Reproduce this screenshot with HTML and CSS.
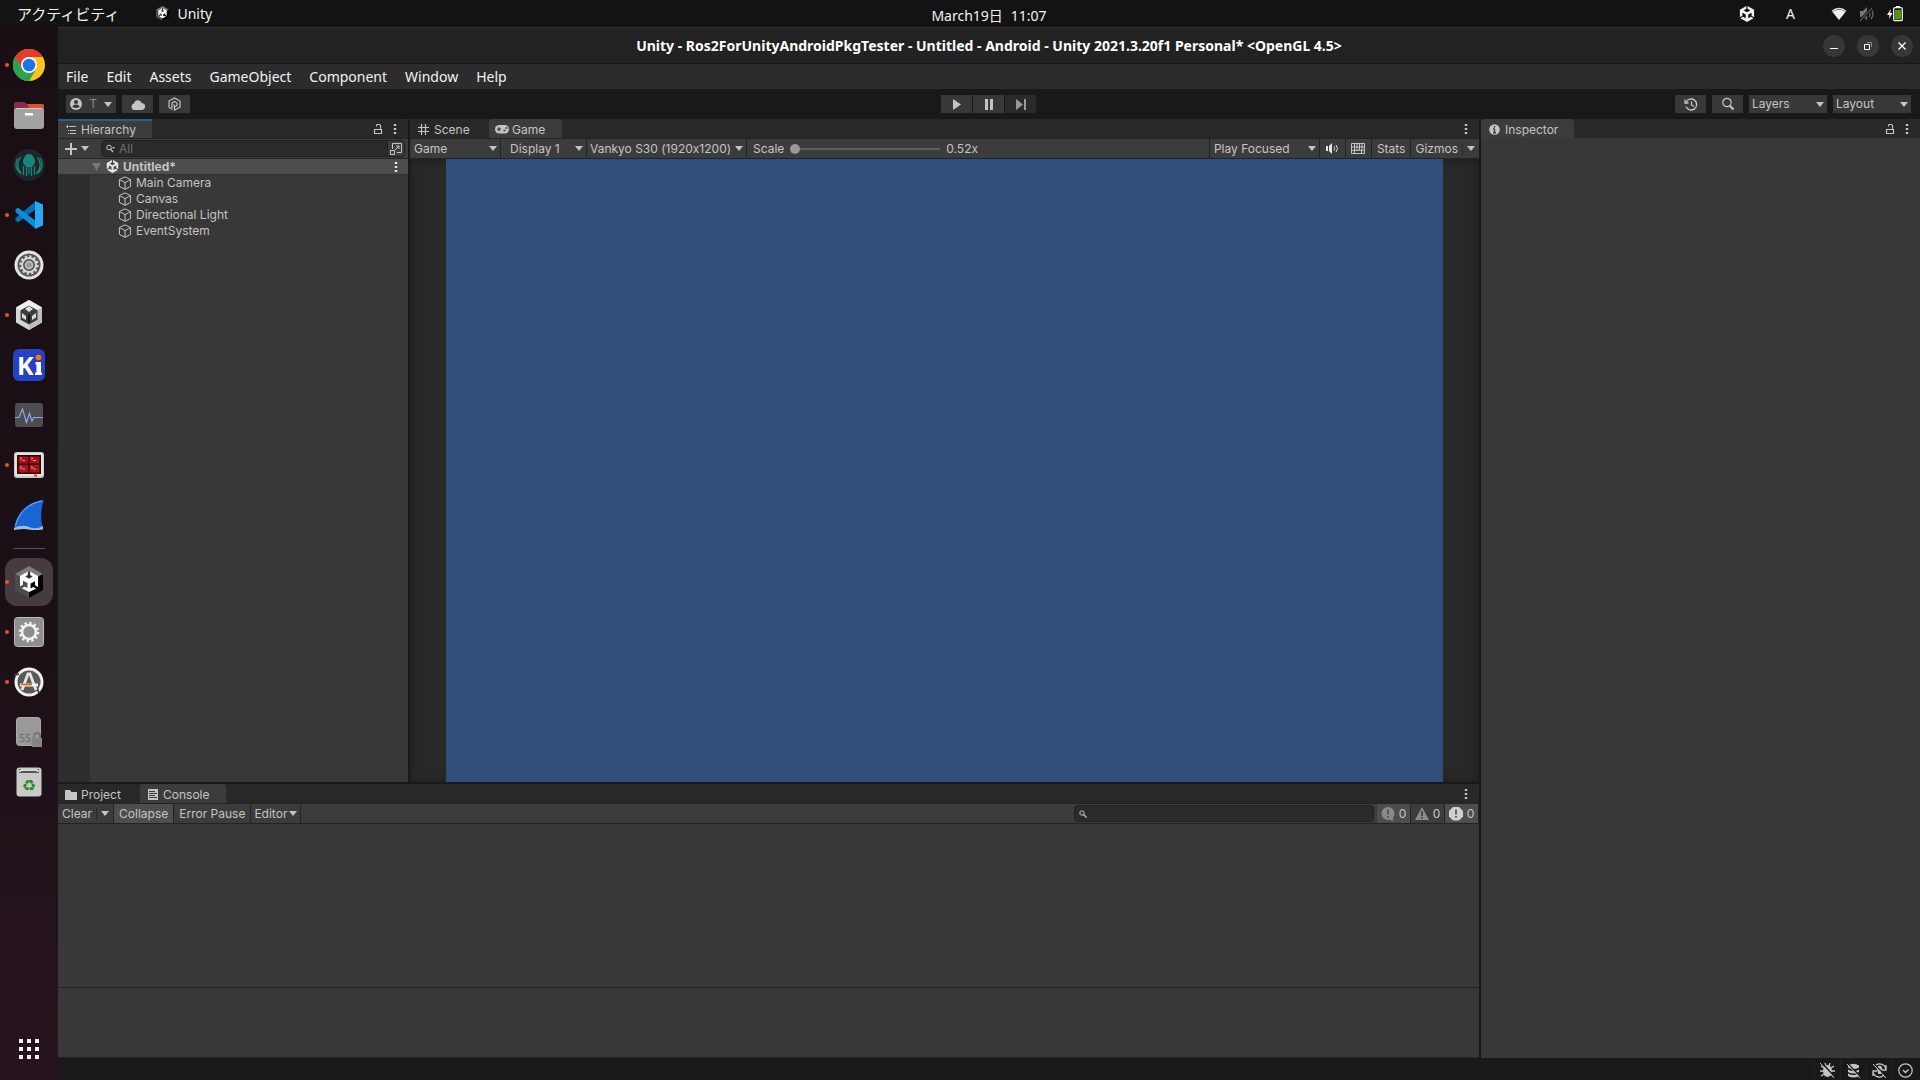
FILE: index.html
```
<!DOCTYPE html>
<html lang="ja">
  <head>
    <meta charset="UTF-8" />
    <title>Unity</title>
    <link rel="stylesheet" href="styles.css">
  </head>

  <body>
    <!-- shared icons -->
    <svg class="defs" aria-hidden="true">
      <symbol id="unity" viewBox="0 0 24 24"><path d="m12.9288 4.2939 3.7997 2.1929c.1366.077.1415.2905 0 .3675l-4.515 2.6076a.4192.4192 0 0 1-.4246 0L7.274 6.8543c-.139-.0745-.1415-.293 0-.3675l3.7972-2.193V0L1.3758 5.5977V16.793l3.7177-2.1456v-4.3858c-.0025-.1565.1813-.2682.318-.1838l4.5148 2.6076a.4252.4252 0 0 1 .2136.3676v5.2127c.0025.1565-.1813.2682-.3179.1838l-3.7996-2.1929-3.7178 2.1457L12 24l9.6954-5.5977-3.7178-2.1457-3.7996 2.1929c-.1341.082-.3229-.0248-.3179-.1838V13.053c0-.1565.087-.2956.2136-.3676l4.5149-2.6076c.134-.082.3228.0224.3179.1838v4.3858l3.7177 2.1456V5.5977L12.9288 0Z" fill="currentColor"/></symbol>
      <symbol id="unity-hex" viewBox="0 0 32 32">
        <path d="M16 0 30 8 16 16 2 8z" fill="#7b7b7b"/>
        <path d="M2 8 16 16V32L2 24z" fill="#4c4c4c"/>
        <path d="M30 8 16 16V32l14-8z" fill="#000"/>
        <path d="m16 5.500 3.500 1.900v3.500L16 12.800l-3.500-1.900V7.400z" fill="#333"/>
        <path d="M14.800 5.500v3.600l-2.600 1.500 3.800 2.100 3.800-2.100-2.600-1.500V5.500l7.800 4.500v11l-3-1.700v-4.100l-4.400 2.400v4.900l2.600-1.500 3 1.700L16 26l-7.200-3.800 3-1.700 2.600 1.500v-4.900L10 14.700v4.100L7 20.500V10z" fill="#fff"/>
      </symbol>
      <symbol id="cube" viewBox="0 0 14 14"><path d="M7 .8 12.600 3.600V10.400L7 13.300 1.400 10.400V3.600zM1.400 3.600 7 6.600l5.600-3M7 6.600v6.700" fill="none" stroke="currentColor"/></symbol>
      <symbol id="kebab" viewBox="0 0 4 12"><path d="M.8 1h2.400v2H.8zM.8 5h2.400v2H.8zM.8 9h2.400v2H.8z" fill="currentColor"/></symbol>
      <symbol id="lock" viewBox="0 0 10 12"><path d="M1.500 6.500h7v4h-7zM3.500 3.500V2.500a1 1 0 0 1 1-1h2a1 1 0 0 1 1 1v4" fill="none" stroke="currentColor" stroke-width="1.200"/></symbol>
      <symbol id="magnifier" viewBox="0 0 14 14"><circle cx="6" cy="5.500" r="4.200" fill="none" stroke="currentColor" stroke-width="1.200"/><path d="m9 9 3.500 3.500" stroke="currentColor" stroke-width="2.200"/></symbol>
    </svg>

    <header class="topbar">
      <div class="top-left">
        <a href="#" class="activities">アクティビティ</a>
        <a href="#" class="app-menu"><svg width="15" height="17"><use href="#unity-hex"/></svg>Unity</a>
      </div>
      <div class="clock"><span>March19日</span><span>11:07</span></div>
      <div class="tray">
        <svg class="tray-unity" width="16" height="16"><use href="#unity"/></svg>
        <span class="ime">A</span>
        <svg width="16" height="14" viewBox="0 0 16 14"><path d="M1 4.300C5 .6 11 .6 15 4.300" fill="none" stroke="#ddd" stroke-width="1.400"/><path d="M8 13 1.500 5C5.500 2 10.500 2 14.500 5z" fill="#f2f2f2"/></svg>
        <svg class="sound" width="16" height="16" viewBox="0 0 16 16"><path d="M1 5h3l4-4v13L4 11H1z" fill="#777"/><path d="M10 5q2 3 0 6M12 3q4 5 0 10" fill="none" stroke="#666" stroke-width="1.300"/><path d="M1 15 14 1" stroke="#131313" stroke-width="3"/><path d="M1 15 13 2" stroke="#777"/></svg>
        <svg class="battery" width="17" height="16" viewBox="0 0 17 16"><path d="M4 3 0 9h2.500L2 13l3.500-6H3.200z" fill="#fff"/><path d="M9 0h4v2H9z" fill="#fff"/><rect x="6.700" y="1.700" width="8.600" height="13" rx="1.300" fill="#131313" stroke="#eee" stroke-width="1.300"/><path d="M8 4h6v9.500H8z" fill="#4e9a06"/></svg>
      </div>
    </header>

    <div class="desktop">
      <nav class="dock">
        <button class="app running" aria-label="Chrome"><svg width="32" height="32" viewBox="0 0 32 32"><circle cx="16" cy="16" r="16" fill="#fcc31e"/><path d="M2.100 8A16 16 0 0 0 16 32l7-12-7 4-7-4z" fill="#2da14b"/><path d="M16 0A16 16 0 0 1 29.900 8H16l-7 12L2.100 8A16 16 0 0 1 16 0z" fill="#e33b2e"/><path d="M2.100 8A16 16 0 0 0 16 32l6.900-12H9z" fill="#2da14b"/><circle cx="16" cy="16" r="8" fill="#fff"/><circle cx="16" cy="16" r="6.300" fill="#1a73e8"/></svg></button>
        <button class="app" aria-label="ファイル"><svg width="32" height="32" viewBox="0 0 32 32"><path d="M1 5q0-2 2-2h8l3 2h15q2 0 2 2v6H1z" fill="#8c2a4e"/><path d="M14 5h15q2 0 2 2v6H18z" fill="#d9532c"/><rect x="1" y="9" width="30" height="21" rx="3" fill="#a2a2a2"/><path d="M3 9.500h26" stroke="#ccc"/><rect x="12" y="14" width="8" height="2.500" fill="#fff"/></svg></button>
        <button class="app" aria-label="GitKraken"><svg width="32" height="32" viewBox="0 0 32 32"><circle cx="16" cy="16" r="16" fill="#1d2528"/><path d="M16 5c-4 0-6 5-6 8 0 2 2 3 3 5h6c1-2 3-3 3-5 0-3-2-8-6-8z" fill="#16877a"/><path d="M13.500 17v10M16 17v8M18.500 17v10M10.500 17v9M21.500 17v9M7.500 8q-6 9 1 17M24.500 8q6 9-1 17M5 9q-5 8 2 15M27 9q5 8-2 15" fill="none" stroke="#16877a" stroke-width="1.300"/></svg></button>
        <button class="app running" aria-label="Visual Studio Code"><svg width="30" height="30" viewBox="0 0 30 30"><path d="M1.500 20.500 4 22.500 22 9V1L1.500 18z" fill="#0b6db4"/><path d="M1.500 9.500 4 7.500 22 21v8L1.500 12z" fill="#0d8bdc"/><path d="M21 1l8 3.500v21L21 29z" fill="#2aa9f3"/></svg></button>
        <button class="app" aria-label="設定"><svg width="30" height="30" viewBox="0 0 30 30"><circle cx="15" cy="15" r="14.500" fill="#e4e4e4"/><circle cx="15" cy="15" r="11.500" fill="#575757"/><circle cx="15" cy="15" r="8.500" fill="none" stroke="#d6d6d6" stroke-width="2.500" stroke-dasharray="2.200 2.250"/><circle cx="15" cy="15" r="7" fill="none" stroke="#d6d6d6" stroke-width="2"/><circle cx="15" cy="15" r="3.500" fill="#999" stroke="#c6c6c6" stroke-width="1.500"/></svg></button>
        <button class="app running" aria-label="Unity Hub"><svg width="28" height="32" viewBox="0 0 28 32"><path d="M14 1 27 8.500v15L14 31 1 23.500v-15z" fill="#d5d5d5"/><path d="M14 1 27 8.500 14 16 1 8.500z" fill="#efefef"/><path d="M14 16 27 8.500v15L14 31z" fill="#bdbdbd"/><path d="M14 6.500 22.500 11.200v9.600L14 25.500 5.500 20.800v-9.600z" fill="#3c3c3c"/><path d="m14 7 4 3-4 3-4-3zM7 14l4 3v4l-4-2.500zM21 14l-4 3v4l4-2.500z" fill="#dcdcdc"/><path d="M14 15.500v8" stroke="#111" stroke-width="2"/></svg></button>
        <button class="app" aria-label="KiCad"><svg width="32" height="32" viewBox="0 0 32 32"><rect width="32" height="32" rx="6" fill="#2741c4"/><text x="4" y="26" class="ki">K</text><path d="M22.500 13H28V23.500h1V26h-7v-2.500h1.500V15.500h-1z" fill="#fff"/><circle cx="25.500" cy="8.500" r="2.800" fill="#ff7800"/></svg></button>
        <button class="app" aria-label="システムモニター"><svg width="28" height="24" viewBox="0 0 28 24"><rect width="28" height="24" rx="3" fill="#4b4d50"/><path d="M0 14.500h4L7.500 6l4 13.500 3-9L17 18l1.500-3.500H28" fill="none" stroke="#8fa8ea" stroke-width="1.200"/></svg></button>
        <button class="app running" aria-label="Terminator"><svg width="32" height="28" viewBox="0 0 32 28"><rect x="1" y="1" width="30" height="26" rx="3" fill="#c9cbc5"/><rect x="2" y="2" width="28" height="23" rx="2" fill="#e2e4de"/><rect x="4" y="4" width="24" height="19" fill="#300"/><path d="M5.500 5.500h10v7h-10zM16.500 5.500h10v7h-10zM5.500 14h10v7.500h-10zM16.500 14h10v7.500h-10z" fill="#a3131b"/><path d="m7 6.500 2 1-2 1M9 9.500h3M18 6.500l2 1-2 1M20 9.500h3M7 15.500l2 1-2 1M9 18h3M18 15.500l2 1-2 1M20 18h3" fill="none" stroke="#f2a5a5" stroke-width=".8"/><path d="M21 24.500h3" stroke="#f33" stroke-width="2"/></svg></button>
        <button class="app" aria-label="Wireshark"><svg width="32" height="32" viewBox="0 0 32 32"><path d="M1 30C3 14 15 2 31 1c-3 7-4 18-1 29-10-2-18 1-29 0z" fill="#1766d2"/><path d="M2.500 27C5 14 16 4 29 2" fill="none" stroke="#71aef5"/><path d="M1 29q8-4 15-1t14-1v3.500q-8 1-14 0t-15 .5z" fill="#9dbbea"/></svg></button>
        <hr class="dock-line">
        <button class="app running current" aria-label="Unity"><svg width="32" height="32"><use href="#unity-hex"/></svg></button>
        <button class="app running" aria-label="ユーティリティ"><svg width="30" height="30" viewBox="0 0 30 30"><rect x=".5" y=".5" width="29" height="29" rx="3" fill="#8e8e8e" stroke="#bbb"/><circle cx="15" cy="15" r="9" fill="none" stroke="#f2f2f2" stroke-width="2.600" stroke-dasharray="2.300 2.412"/><circle cx="15" cy="15" r="7" fill="none" stroke="#f2f2f2" stroke-width="2.600"/></svg></button>
        <button class="app running" aria-label="ソフトウェアの更新"><svg width="30" height="30" viewBox="0 0 30 30"><circle cx="15" cy="15" r="14.500" fill="#f1f1f1"/><circle cx="15" cy="15" r="11.500" fill="#595959"/><path d="M0 8l5-1M25 26l-2-5" stroke="#444" stroke-width="2"/><path d="M8 23 14 7h2l6 16" fill="none" stroke="#e6e6e6" stroke-width="2.800"/><path d="M6 18h18" stroke="#f1f1f1" stroke-width="3"/><path d="M7 17.500h11" stroke="#e95420" stroke-width="1.600"/></svg></button>
        <button class="app" aria-label="SSD"><svg width="26" height="30" viewBox="0 0 26 30"><rect x=".5" y=".5" width="24" height="28" rx="3" fill="#999" stroke="#aaa"/><text x="3" y="25" class="ssd">SS</text><path d="M18 21v-2a3 3 0 0 1 6 0v2" fill="none" stroke="#777" stroke-width="2"/><path d="M16 21h10v9H16z" fill="#858585"/></svg></button>
        <button class="app" aria-label="ゴミ箱"><svg width="26" height="30" viewBox="0 0 26 30"><rect x=".5" y=".5" width="25" height="29" rx="3" fill="#cacaca"/><path d="M3 2h20v4H3z" fill="#555"/><path d="M4 5q0-2 2-2h14q2 0 2 2" fill="none" stroke="#fff" stroke-width="1.500"/><text x="13" y="24" class="recycle">♻</text></svg></button>
        <button class="app show-apps" aria-label="アプリケーションを表示する"><svg width="20" height="20" viewBox="0 0 20 20" fill="#f2f2f2"><path d="M0 0h4v4H0zM8 0h4v4H8zM16 0h4v4h-4zM0 8h4v4H0zM8 8h4v4H8zM16 8h4v4h-4zM0 16h4v4H0zM8 16h4v4H8zM16 16h4v4h-4z"/></svg></button>
      </nav>

      <main class="window">
        <div class="titlebar">
          <h1>Unity - Ros2ForUnityAndroidPkgTester - Untitled - Android - Unity 2021.3.20f1 Personal* &lt;OpenGL 4.5&gt;</h1>
          <div class="win-btns">
            <button aria-label="最小化"><svg width="10" height="10" viewBox="0 0 10 10"><path d="M1 7.500h8" stroke="#fff"/></svg></button>
            <button aria-label="元に戻す"><svg width="10" height="10" viewBox="0 0 10 10"><path d="M1.500 3.500h5v5h-5z" fill="none" stroke="#fff"/><path d="M4 1.500h4.500V6" fill="none" stroke="#888"/></svg></button>
            <button aria-label="閉じる"><svg width="10" height="10" viewBox="0 0 10 10"><path d="m1.500 1.500 7 7m0-7-7 7" stroke="#fff" stroke-width="1.400"/></svg></button>
          </div>
        </div>

        <nav class="menubar">
          <a href="#">File</a><a href="#">Edit</a><a href="#">Assets</a><a href="#">GameObject</a><a href="#">Component</a><a href="#">Window</a><a href="#">Help</a>
        </nav>

        <div class="toolbar">
          <div class="tools">
            <button class="tool account"><svg width="12" height="12" viewBox="0 0 12 12"><circle cx="6" cy="6" r="6" fill="#c4c4c4"/><circle cx="6" cy="4" r="2" fill="#383838"/><path d="M2.500 9q0-2.500 3.500-2.500T9.500 9q-3.500 2-7 0z" fill="#383838"/></svg><span class="dim">T</span><i class="arrow"></i></button>
            <button class="tool cloud" aria-label="Cloud"><svg width="14" height="11" viewBox="0 0 14 11"><path d="M3.500 11a3.300 3.300 0 0 1-.5-6.500A4 4 0 0 1 10.700 4 3.500 3.500 0 0 1 10.500 11z" fill="#c4c4c4"/></svg></button>
            <button class="tool" aria-label="Plastic SCM"><svg width="13" height="14" viewBox="0 0 13 14"><path d="M4.500 12.500 1 10.200V4L6.500 1 12 4v6.200L6.500 13v-3M4 11V6l2.500-1.500L9 6v2.500L6.500 10 6 9V7.500" fill="none" stroke="#c4c4c4" stroke-width="1.200"/></svg></button>
          </div>
          <div class="play-btns">
            <button class="tool" aria-label="Play"><svg width="9" height="11"><path d="M1 0 9 5.500 1 11z" fill="#c4c4c4"/></svg></button>
            <button class="tool" aria-label="Pause"><svg width="8" height="11"><path d="M0 0h3v11H0zM5 0h3v11H5z" fill="#c4c4c4"/></svg></button>
            <button class="tool off" aria-label="Step"><svg width="10" height="11"><path d="M0 0 7 5.500 0 11zM8 0h2v11H8z" fill="#999"/></svg></button>
          </div>
          <div class="tools right">
            <button class="tool" aria-label="Undo History"><svg width="14" height="13" viewBox="0 0 14 13"><path d="M2 4.500A5.500 5.500 0 1 1 2 8.500M1 1.500v3.500h3.500M7.500 3.500v3.500l2.500 1.500" fill="none" stroke="#c4c4c4" stroke-width="1.300"/></svg></button>
            <button class="tool" aria-label="Search"><svg width="14" height="14" color="#c4c4c4"><use href="#magnifier"/></svg></button>
            <span class="drop"><select aria-label="Layers"><option>Layers</option></select></span>
            <span class="drop"><select aria-label="Layout"><option>Layout</option></select></span>
          </div>
        </div>

        <div class="workspace">
          <section class="panel hierarchy">
            <div class="tabs">
              <button class="tab active focus"><svg width="10" height="10" viewBox="0 0 10 10"><path d="M0 1.500h2M3 1.500h7M4 5.500h6M4 8.500h6M1.500 0v3M2 5.500h1M2 8.500h1" fill="none" stroke="#c4c4c4"/></svg>Hierarchy</button>
              <div class="tab-tools"><button aria-label="Lock"><svg width="10" height="12"><use href="#lock"/></svg></button><button aria-label="Menu"><svg width="4" height="12"><use href="#kebab"/></svg></button></div>
            </div>
            <div class="bar">
              <button class="add" aria-label="Create"><svg width="12" height="12"><path d="M6 0v12M0 6h12" stroke="#c4c4c4" stroke-width="2"/></svg><i class="arrow"></i></button>
              <div class="search">
                <svg width="9" height="9" viewBox="0 0 9 9"><circle cx="3" cy="3.500" r="2.300" fill="none" stroke="#c4c4c4"/><path d="m4.500 5 2.500 3" stroke="#c4c4c4" stroke-width="1.200"/><path d="M6 3h3L7.500 5z" fill="#c4c4c4"/></svg>
                <input type="text" placeholder="All" aria-label="Search hierarchy">
                <button aria-label="Open search"><svg width="12" height="12" viewBox="0 0 12 12"><path d="M2.500 6V.5h9v9H7M.5 7.500h4v4h-4zM5 7l4-4M6 3h3v3" fill="none" stroke="#c4c4c4"/></svg></button>
              </div>
            </div>
            <div class="tree">
              <div class="row scene"><svg class="fold" width="9" height="8"><path d="M0 0h9L4.500 8z" fill="#777"/></svg><svg width="13" height="13"><use href="#unity"/></svg><span>Untitled*</span><button aria-label="Scene menu"><svg width="4" height="12"><use href="#kebab"/></svg></button></div>
              <ul>
                <li class="row"><svg width="14" height="14"><use href="#cube"/></svg>Main Camera</li>
                <li class="row"><svg width="14" height="14"><use href="#cube"/></svg>Canvas</li>
                <li class="row"><svg width="14" height="14"><use href="#cube"/></svg>Directional Light</li>
                <li class="row"><svg width="14" height="14"><use href="#cube"/></svg>EventSystem</li>
              </ul>
            </div>
          </section>

          <section class="panel game">
            <div class="tabs">
              <button class="tab scene-tab"><svg width="11" height="11"><path d="M3.500 0v11M7.500 0v11M0 3.500h11M0 7.500h11" stroke="#c4c4c4" stroke-width="1.200"/></svg>Scene</button>
              <button class="tab active game-tab"><svg width="14" height="9" viewBox="0 0 14 9"><rect width="14" height="8.500" rx="4.200" fill="#c4c4c4"/><path d="M2 4.200h4M4 2.200v4M8.500 5.500h2M10.500 3h2" stroke="#3c3c3c" stroke-width="1.300"/></svg>Game</button>
              <div class="tab-tools"><button aria-label="Menu"><svg width="4" height="12"><use href="#kebab"/></svg></button></div>
            </div>
            <div class="bar game-bar">
              <span class="drop view"><select aria-label="View"><option>Game</option></select></span>
              <span class="drop display"><select aria-label="Display"><option>Display 1</option></select></span>
              <span class="drop aspect"><select aria-label="Aspect"><option>Vankyo S30 (1920x1200)</option></select></span>
              <label for="scale">Scale</label>
              <input type="range" id="scale" min="0" max="100" value="0">
              <output for="scale">0.52x</output>
              <span class="drop focused"><select aria-label="Play mode"><option>Play Focused</option></select></span>
              <button class="cell" aria-label="Mute"><svg width="13" height="11" viewBox="0 0 13 11"><path d="M0 3h2v5H0zM3 3l3-3v11L3 8z" fill="#e8e8e8"/><path d="M8 3.500q1.500 2 0 4M10 2q3 3.500 0 7" fill="none" stroke="#ddd"/></svg></button>
              <button class="cell" aria-label="Keyboard"><svg width="14" height="11" viewBox="0 0 14 11"><path d="M.5.5h13v10H.5zM.5 4h13M.5 7.300h13M3.500.5v7M6 .5v7M8.500.5v7M11 .5v7M3.500 7v3.500M10.500 7v3.500" fill="none" stroke="#c4c4c4"/></svg></button>
              <button class="cell text">Stats</button>
              <button class="cell split">Gizmos<i class="sep"></i><i class="arrow"></i></button>
            </div>
            <div class="stage"><div class="view-area"></div></div>
          </section>

          <section class="panel inspector">
            <div class="tabs">
              <button class="tab active"><svg width="11" height="11" viewBox="0 0 11 11"><circle cx="5.500" cy="5.500" r="5.300" fill="#c4c4c4"/><path d="M5.500 2v1.700M5.500 4.700V9M4 5h1.500M4 8.800h3" stroke="#3c3c3c" stroke-width="1.400"/></svg>Inspector</button>
              <div class="tab-tools"><button aria-label="Lock"><svg width="10" height="12"><use href="#lock"/></svg></button><button aria-label="Menu"><svg width="4" height="12"><use href="#kebab"/></svg></button></div>
            </div>
          </section>

          <section class="panel console">
            <div class="tabs">
              <button class="tab project-tab"><svg width="12" height="10"><path d="M0 0h5l1.500 2H12v8H0z" fill="#c4c4c4"/></svg>Project</button>
              <button class="tab active console-tab"><svg width="10" height="11"><path d="M0 0h10v11H0z" fill="#c4c4c4"/><path d="M1 2.500h6M1 4.500h8M1 6.500h6M1 8.500h8" stroke="#3c3c3c"/></svg>Console</button>
              <div class="tab-tools"><button aria-label="Menu"><svg width="4" height="12"><use href="#kebab"/></svg></button></div>
            </div>
            <div class="bar console-bar">
              <button class="cell split">Clear<i class="sep"></i><i class="arrow"></i></button>
              <button class="cell text on">Collapse</button>
              <button class="cell text">Error Pause</button>
              <span class="drop editor"><select aria-label="Editor"><option>Editor</option></select></span>
              <div class="search">
                <svg width="8" height="8" viewBox="0 0 8 8"><circle cx="3" cy="3" r="2.200" fill="none" stroke="#c4c4c4"/><path d="m4.500 4.500 3 3" stroke="#c4c4c4" stroke-width="1.300"/></svg>
                <input type="text" aria-label="Search console">
              </div>
              <button class="cell count on"><svg width="14" height="14" viewBox="0 0 14 14"><circle cx="7" cy="6.500" r="6.500" fill="#8a8a8a"/><path d="m8 12 4 2V9z" fill="#8a8a8a"/><path d="M7 2.500v5M7 9v1.700" stroke="#4d4d4d" stroke-width="1.600"/></svg>0</button>
              <button class="cell count"><svg width="14" height="14" viewBox="0 0 14 14"><path d="M7 0 14 13H0z" fill="#8a8a8a"/><path d="M7 4v5M7 10v1.700" stroke="#3c3c3c" stroke-width="1.600"/></svg>0</button>
              <button class="cell count on"><svg width="14" height="14" viewBox="0 0 14 14"><path d="M4 0h6l4 4v5.500l-4 4H4l-4-4V4z" fill="#d0d0d0"/><path d="M7 2.500v5M7 9v1.700" stroke="#4d4d4d" stroke-width="1.600"/></svg>0</button>
            </div>
            <div class="log"></div>
            <div class="detail"></div>
          </section>
        </div>

        <footer class="status">
          <button aria-label="Debug"><svg width="15" height="15" viewBox="0 0 15 15"><ellipse cx="7.500" cy="8" rx="4.500" ry="6" fill="#c4c4c4"/><path d="M1 3l3 2M14 3l-3 2M0 8h15M1 13l3-2M14 13l-3-2M5 0l1 3M10 0 9 3" stroke="#c4c4c4" stroke-width="1.300"/><path d="m2 0 13 14" stroke="#191919" stroke-width="1.500"/><path d="m0 0 14 15" stroke="#c4c4c4"/></svg></button>
          <button aria-label="Cache"><svg width="15" height="15" viewBox="0 0 15 15"><path d="M2 2.500q5.500-3.500 11 0v2q-5.500 3-11 0zM2 6.500q5.500 3 11 0v2.500q-5.500 3-11 0zM2 10.500q5.500 3 11 0V13q-5.500 3-11 0z" fill="#c4c4c4"/><path d="m2 1 13 13" stroke="#191919" stroke-width="1.500"/><path d="m1 1 13 14" stroke="#c4c4c4"/></svg></button>
          <button aria-label="Auto Generate"><svg width="15" height="15" viewBox="0 0 15 15"><path d="M3 3a6.300 6.300 0 0 1 11 4M12 12A6.300 6.300 0 0 1 1 8M14 2v5h-4M1 13V8h4" fill="none" stroke="#c4c4c4" stroke-width="1.300"/><path d="M5 6.500a2.700 2.700 0 1 1 5 0Q9 8 9 11H6Q6 8 5 6.500z" fill="#c4c4c4"/><path d="m2 1 13 13" stroke="#191919" stroke-width="1.500"/><path d="m1 1 13 14" stroke="#c4c4c4"/></svg></button>
          <button aria-label="Progress"><svg width="15" height="15" viewBox="0 0 15 15"><circle cx="7.500" cy="7.500" r="6.700" fill="none" stroke="#c4c4c4" stroke-width="1.200"/><path d="m5 7 2.500 2.500L10.500 6.500" fill="none" stroke="#c4c4c4" stroke-width="1.400"/></svg></button>
        </footer>
      </main>
    </div>
  </body>
</html>
```

FILE: styles.css
```
* {
  box-sizing: border-box;
}

body {
  display: flex;
  flex-direction: column;
  height: 100vh;
  margin: 0;
  overflow: hidden;
  background: #191919;
  color: #c4c4c4;
  font: 12px/16px Inter, "Liberation Sans", "Noto Sans CJK JP", sans-serif;
}

svg {
  display: block;
  flex: none;
}

.defs {
  position: absolute;
  width: 0;
  height: 0;
}

a {
  color: inherit;
  text-decoration: none;
}

button,
input,
select {
  margin: 0;
  padding: 0;
  border: 0;
  border-radius: 0;
  outline: none;
  background: none;
  color: inherit;
  font: inherit;
}

button {
  display: flex;
  align-items: center;
  justify-content: center;
  white-space: nowrap;
}

.arrow,
.drop::after {
  border: 4px solid transparent;
  border-top: 5px solid #c4c4c4;
  border-bottom: 0;
}

/* desktop top bar */
.topbar {
  display: grid;
  grid-template-columns: 58px minmax(0, 1fr) auto minmax(0, 1fr);
  align-items: center;
  height: 27px;
  background: #131313;
  color: #f2f2f2;
  font: 14px/20px "Noto Sans", "Noto Sans CJK JP", sans-serif;
}

.top-left {
  grid-column: 1 / 3;
  display: flex;
  align-items: center;
  gap: 36px;
  padding-left: 17px;
}

.activities {
  font-size: 15px;
}

.app-menu {
  display: flex;
  align-items: center;
  gap: 7px;
}

.clock {
  display: flex;
  gap: 8px;
  padding-top: 4px;
}

.tray {
  display: flex;
  align-items: center;
  justify-content: flex-end;
  padding-right: 16px;
}

.tray .ime {
  margin: 0 36px 0 31px;
}

.tray .sound {
  margin: 0 12px;
}

.desktop {
  display: flex;
  flex: 1;
  min-height: 0;
}

/* dock */
.dock {
  display: flex;
  flex-direction: column;
  align-items: center;
  gap: 2px;
  width: 58px;
  padding: 14px 0 7px;
  background: linear-gradient(#190e14, #1c1017 60%, #27141e);
}

.app {
  position: relative;
  width: 48px;
  height: 48px;
  border-radius: 12px;
}

.app.current {
  background: #463b41;
}

.app.running::before {
  content: "";
  position: absolute;
  left: 0;
  width: 4px;
  height: 4px;
  border-radius: 50%;
  background: #e95420;
}

.show-apps {
  margin-top: auto;
}

.dock-line {
  width: 32px;
  height: 1px;
  margin: 7px 0;
  border: 0;
  background: #5a5156;
}

.ki {
  fill: #fff;
  font: bold 25px "Noto Sans", sans-serif;
}

.ssd {
  fill: #6b6b6b;
  font: 11px "Noto Sans", sans-serif;
}

.recycle {
  fill: #218c21;
  font: 16px "DejaVu Sans", sans-serif;
  text-anchor: middle;
}

/* window frame */
.window {
  display: flex;
  flex-direction: column;
  flex: 1;
  min-width: 0;
}

.titlebar {
  position: relative;
  display: flex;
  align-items: center;
  justify-content: center;
  height: 37px;
  border-top: 1px solid #333;
  border-bottom: 1px solid #181818;
  background: #222;
}

.titlebar h1 {
  margin: 0;
  color: #fff;
  font: bold 14px/20px "Noto Sans", sans-serif;
}

.win-btns {
  position: absolute;
  right: 7px;
  display: flex;
  gap: 12px;
}

.win-btns button {
  width: 22px;
  height: 22px;
  border-radius: 50%;
  background: #373737;
}

.menubar {
  display: flex;
  gap: 18px;
  height: 25px;
  padding-left: 8px;
  background: #2c2c2c;
  color: #f2f2f2;
  font: 14px/25px "Noto Sans", sans-serif;
}

.toolbar {
  display: grid;
  grid-template-columns: 1fr auto 1fr;
  align-items: center;
  height: 30px;
  padding: 0 9px 0 8px;
}

.tools {
  display: flex;
  gap: 6px;
}

.tools.right {
  justify-content: flex-end;
}

.play-btns {
  display: flex;
  gap: 1px;
}

.tool {
  width: 31px;
  height: 18px;
  background: #383838;
}

.tool.off {
  background: #2a2a2a;
}

.tool.account {
  gap: 7px;
  width: 50px;
}

.dim {
  color: #8a8a8a;
}

/* drop-downs */
.drop {
  position: relative;
  display: flex;
  align-items: center;
}

.drop::after {
  content: "";
  position: absolute;
  right: 3px;
  pointer-events: none;
}

.drop select {
  width: 100%;
  height: 100%;
  appearance: none;
  overflow: hidden;
  font-variant-ligatures: no-contextual;
}

.tools .drop {
  width: 78px;
  height: 18px;
  padding-left: 3px;
  background: #383838;
}

/* panels */
.workspace {
  display: grid;
  grid-template-columns: minmax(0, 350fr) minmax(0, 1069fr) minmax(0, 439fr);
  grid-template-rows: minmax(0, 663fr) minmax(0, 274fr);
  gap: 2px;
  flex: 1;
  min-height: 0;
}

.panel {
  display: flex;
  flex-direction: column;
  background: #383838;
}

.inspector {
  grid-column: 3;
  grid-row: 1 / 3;
}

.console {
  grid-column: 1 / 3;
}

.tabs {
  display: flex;
  height: 19px;
  border-radius: 3px 3px 0 0;
  background: #282828;
}

.tab {
  justify-content: flex-start;
  gap: 5px;
  padding: 2px 16px 0 8px;
  border-radius: 3px 3px 0 0;
}

.tab.active {
  background: #3c3c3c;
}

.tab.focus {
  padding-top: 0;
  border-top: 2px solid #2c5d87;
  border-radius: 0;
}

.scene-tab {
  width: 79px;
}

.game-tab {
  width: 73px;
  padding-left: 6px;
  gap: 3px;
}

.project-tab {
  width: 82px;
  padding-left: 7px;
  gap: 4px;
}

.console-tab {
  width: 86px;
}

.tab-tools {
  display: flex;
  align-items: center;
  gap: 10px;
  margin-left: auto;
  padding-right: 11px;
}

.bar {
  display: flex;
  align-items: stretch;
  height: 21px;
  border-top: 1px solid #232323;
  border-bottom: 1px solid #232323;
  background: #3c3c3c;
}

.search {
  display: flex;
  align-items: center;
  height: 17px;
  margin: 1px 3px;
  padding-left: 4px;
  border: 1px solid #212121;
  border-radius: 4px;
  background: #2a2a2a;
}

.search input {
  flex: 1;
  min-width: 0;
  height: 15px;
  padding-left: 4px;
}

.search input::placeholder {
  color: #6e6e6e;
}

.search button {
  width: 17px;
  height: 15px;
  border-left: 1px solid #212121;
  border-radius: 0 3px 3px 0;
  background: #3c3c3c;
}

/* hierarchy */
.add {
  gap: 4px;
  width: 40px;
  padding-right: 3px;
}

.hierarchy .search {
  flex: 1;
}

.tree {
  flex: 1;
  background: linear-gradient(90deg, #2d2d2d 32px, #383838 32px);
}

.row {
  display: flex;
  align-items: center;
  gap: 4px;
  height: 16px;
}

.row.scene {
  padding: 0 10px 0 34px;
  border-bottom: 1px solid #303030;
  background: #4d4d4d;
  font-weight: bold;
}

.row.scene button {
  margin-left: auto;
}

.row.scene svg {
  color: #e8e8e8;
}

.row .fold {
  margin-right: 1px;
}

.tree ul {
  margin: 0;
  padding: 0 0 0 60px;
  list-style: none;
}

/* game view */
.game-bar > * {
  flex: none;
}

.game-bar .drop,
.cell {
  border-right: 1px solid #232323;
}

.game-bar .drop {
  padding-left: 4px;
}

.view {
  width: 91px;
}

.game-bar .display {
  width: 86px;
  padding-left: 9px;
}

.game-bar .aspect {
  width: 160px;
  padding-left: 3px;
}

.aspect select {
  width: 142px;
}

.game-bar label {
  padding-left: 6px;
  line-height: 19px;
}

#scale {
  width: 150px;
  margin-left: 6px;
  appearance: none;
}

#scale::-webkit-slider-runnable-track {
  height: 2px;
  background: #5e5e5e;
}

#scale::-webkit-slider-thumb {
  width: 10px;
  height: 10px;
  margin-top: -4px;
  border-radius: 50%;
  appearance: none;
  background: #999;
}

.game-bar output {
  padding-left: 6px;
  line-height: 19px;
}

.game-bar .focused {
  width: 111px;
  margin-left: auto;
  border-left: 1px solid #232323;
}

.cell {
  width: 26px;
}

.cell.text {
  width: auto;
  padding: 0 5px;
}

.cell.on {
  background: #4d4d4d;
}

.cell.split {
  gap: 4px;
  width: auto;
  padding: 0 4px;
}

.sep {
  width: 1px;
  height: 12px;
  background: #2a2a2a;
}

.game-bar .cell:last-child {
  border-right: 0;
}

.stage {
  display: flex;
  justify-content: center;
  flex: 1;
  min-height: 0;
  background: #282828;
  box-shadow: inset 0 0 8px #1c1c1c;
}

.view-area {
  height: 100%;
  aspect-ratio: 16 / 10;
  background: #314d79;
}

/* console */
.console-bar .editor {
  width: 50px;
  padding-left: 3px;
  border-right: 1px solid #232323;
}

.console-bar .search {
  width: 300px;
  margin-left: auto;
}

.cell.count {
  gap: 4px;
  width: 34px;
}

.log {
  flex: 163;
}

.detail {
  flex: 69;
  border-top: 1px solid #232323;
  border-bottom: 1px solid #232323;
}

/* status bar */
.status {
  display: flex;
  justify-content: flex-end;
  height: 22px;
  padding: 2px 2px 0 0;
}

.status button {
  width: 26px;
  border-left: 1px solid #232323;
}
```
